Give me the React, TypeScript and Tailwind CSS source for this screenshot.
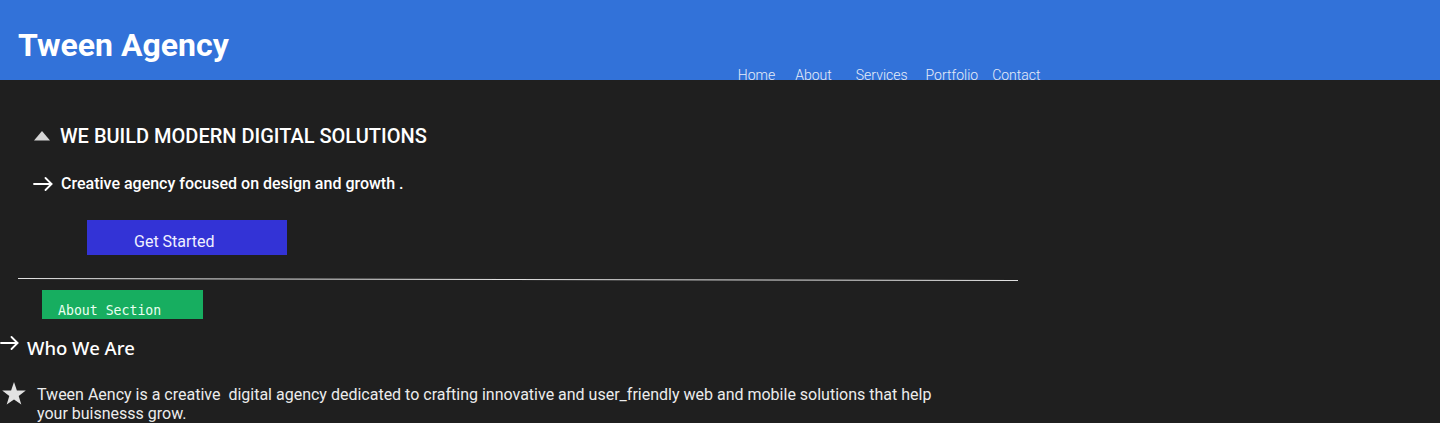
import React from "react";

function Arrow({ w }: { w: number }) {
  return (
    <svg width={w} height={14} viewBox={`0 0 ${w} 14`} fill="none" stroke="currentColor" strokeWidth={1.8} strokeLinecap="round" strokeLinejoin="round">
      <path d={`M1 7 H${w - 1.5}`} />
      <path d={`M${w - 7.5} 1 L${w - 1.5} 7 L${w - 7.5} 13`} />
    </svg>
  );
}

export default function App() {
  return (
    <div className="min-h-[423px] w-full bg-[#1f1f1f] text-white overflow-hidden" style={{ fontFamily: "Roboto, 'Liberation Sans', sans-serif" }}>
      <header className="h-20 bg-[#3272d9] flex items-start pl-[18px]">
        <h1 className="text-[32px] leading-none font-bold mt-[29px] whitespace-nowrap">Tween Agency</h1>
        <nav className="flex ml-[509px] mt-[67px] text-[14px] leading-4 font-light text-[#e6ecf8] whitespace-nowrap">
          <a>Home</a>
          <a className="ml-[20px]">About</a>
          <a className="ml-[24px]">Services</a>
          <a className="ml-[18px]">Portfolio</a>
          <a className="ml-[14px]">Contact</a>
        </nav>
      </header>
      <main>
        <div className="flex items-center pl-[34px] mt-[44px] h-6">
          <svg width="16" height="10" viewBox="0 0 16 10" className="mr-[10px] mb-[1px]">
            <polygon points="8,0 16,9.5 0,9.5" fill="#d6d6d6" />
          </svg>
          <h2 className="text-[20px] font-medium uppercase whitespace-nowrap">WE BUILD MODERN DIGITAL SOLUTIONS</h2>
        </div>
        <div className="flex items-center pl-[33px] mt-[26px] h-5">
          <span className="w-[28px] text-white"><Arrow w={20} /></span>
          <p className="text-[16px] font-medium whitespace-nowrap">Creative agency focused on design and growth .</p>
        </div>
        <button className="block ml-[87px] mt-[26px] w-[200px] h-[35px] bg-[#3333d6] text-left pl-[47px] pt-[8px] text-[16px] text-[#f0f0ff]">Get Started</button>
        <div className="ml-[18px] mt-[24px] w-[1000px] h-px bg-[#e0e0e0] rotate-[0.115deg]"></div>
        <div className="ml-[42px] mt-[10px] w-[161px] h-[29px] bg-[#17ae60] pl-[16px] pt-[13px] text-[13.2px] leading-4 text-[#eafff0] overflow-hidden" style={{ fontFamily: "'DejaVu Sans Mono', monospace" }}>About Section</div>
        <div className="flex items-start mt-[15px] h-7">
          <span className="w-[27px] text-white mt-[2px]"><Arrow w={19} /></span>
          <h3 className="text-[18.5px] leading-7 font-medium" style={{ fontFamily: "'Noto Sans', 'Open Sans', sans-serif" }}>Who We Are</h3>
        </div>
        <div className="flex items-start mt-[23px]">
          <svg width="24" height="23" viewBox="0 0 24 23" className="ml-[2px] mr-[11px] mt-[-3px] shrink-0">
            <polygon points="12,0 14.9,8.4 23.8,8.6 16.7,14 19.3,22.6 12,17.5 4.7,22.6 7.3,14 0.2,8.6 9.1,8.4" fill="#e2e2e2" />
          </svg>
          <p className="text-[16px] leading-[19px] text-[#ececec] w-[900px]">Tween Aency is a creative &nbsp;digital agency dedicated to crafting innovative and user_friendly web and mobile solutions that help your buisnesss grow.</p>
        </div>
      </main>
    </div>
  );
}
